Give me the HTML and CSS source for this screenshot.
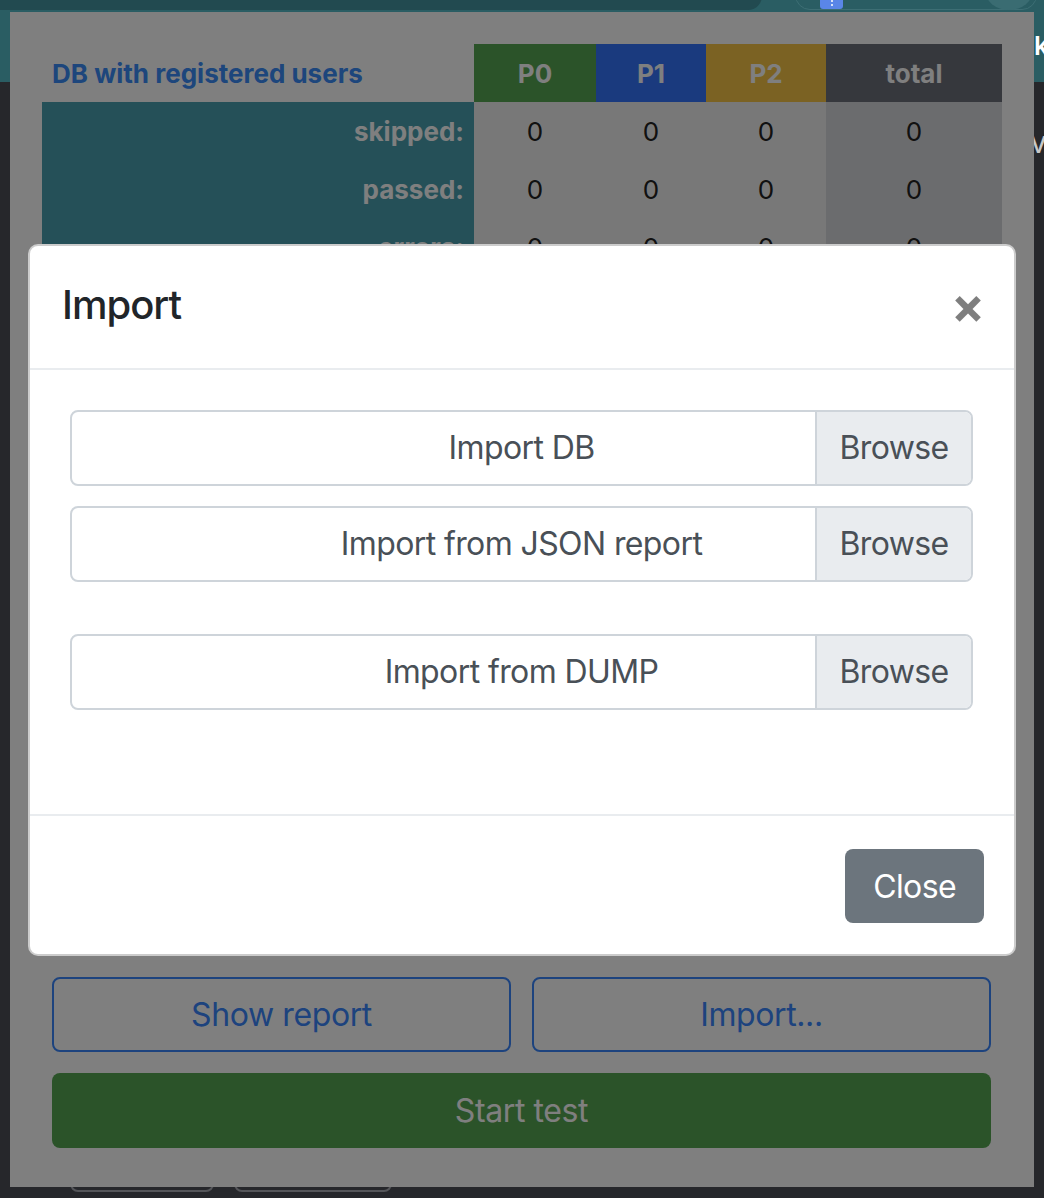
FILE: index.html
```html
<!DOCTYPE html>
<html lang="en">
<head>
    <meta charset="UTF-8">
    <meta name="viewport" content="width=device-width, initial-scale=1.0">
    <title>DB tester</title>
    <link rel="stylesheet" href="styles.css">
</head>
<body>
    <div class="toolbar">
        <span class="tab-pill"></span>
        <span class="omnibox"></span>
        <span class="ext-badge"><i></i><i></i></span>
        <span class="avatar"></span>
        <span class="edge-text">ks</span>
    </div>
    <div class="side-text">ve</div>
    <div class="under-buttons">
        <span class="ghost-btn"></span>
        <span class="ghost-btn wide"></span>
    </div>

    <div class="popup">
        <table class="stats">
            <thead>
                <tr>
                    <th class="caption">DB with registered users</th>
                    <th class="p0">P0</th>
                    <th class="p1">P1</th>
                    <th class="p2">P2</th>
                    <th class="total">total</th>
                </tr>
            </thead>
            <tbody>
                <tr><td class="label">skipped:</td><td>0</td><td>0</td><td>0</td><td class="total">0</td></tr>
                <tr><td class="label">passed:</td><td>0</td><td>0</td><td>0</td><td class="total">0</td></tr>
                <tr><td class="label">errors:</td><td>0</td><td>0</td><td>0</td><td class="total">0</td></tr>
                <tr><td class="label">failed:</td><td>0</td><td>0</td><td>0</td><td class="total">0</td></tr>
                <tr><td class="label">all:</td><td>0</td><td>0</td><td>0</td><td class="total">0</td></tr>
            </tbody>
        </table>

        <div class="log"></div>

        <div class="actions">
            <button class="btn-outline">Show report</button>
            <button class="btn-outline">Import...</button>
        </div>
        <button class="btn-start">Start test</button>

        <div class="backdrop"></div>

        <div class="modal">
            <div class="modal-header">
                <h5 class="modal-title">Import</h5>
                <button class="close">&times;</button>
            </div>
            <div class="modal-body">
                <label class="file-input first">
                    <span class="file-name">Import DB</span>
                    <span class="browse">Browse</span>
                </label>
                <label class="file-input second">
                    <span class="file-name">Import from JSON report</span>
                    <span class="browse">Browse</span>
                </label>
                <label class="file-input">
                    <span class="file-name">Import from DUMP</span>
                    <span class="browse">Browse</span>
                </label>
            </div>
            <div class="modal-footer">
                <button class="btn-secondary">Close</button>
            </div>
        </div>
    </div>
</body>
</html>
```

FILE: styles.css
```css
body {
    margin: 0;
    width: 1044px;
    height: 1198px;
    overflow: hidden;
    position: relative;
    background: #26272b;
    font-family: Inter, 'Noto Sans', sans-serif;
}
.toolbar {
    height: 82px;
    background: #2a5d63;
    position: relative;
}
.tab-pill {
    position: absolute;
    left: 0;
    top: -20px;
    width: 762px;
    height: 30px;
    background: #224a50;
    border-radius: 0 0 14px 0;
}
.omnibox {
    position: absolute;
    left: 795px;
    top: -20px;
    width: 240px;
    height: 28px;
    border: 1px solid #3d6e74;
    border-radius: 16px;
}
.ext-badge {
    position: absolute;
    left: 820px;
    top: 0;
    width: 23px;
    height: 9px;
    background: #5a86e8;
    border-radius: 0 0 3px 3px;
    display: flex;
    flex-direction: column;
    align-items: center;
    gap: 2px;
}
.ext-badge i {
    width: 2px;
    height: 2px;
    border-radius: 50%;
    background: #fff;
}
.avatar {
    position: absolute;
    left: 985px;
    top: -30px;
    width: 48px;
    height: 40px;
    border-radius: 50%;
    background: #3a6c72;
}
.edge-text {
    position: absolute;
    left: 1034px;
    top: 30px;
    color: #fff;
    font-size: 26px;
    font-weight: 600;
}
.side-text {
    position: absolute;
    left: 1030px;
    top: 124px;
    color: #c8c8c8;
    font-size: 30px;
}
.under-buttons {
    position: absolute;
    left: 70px;
    top: 1176px;
    display: flex;
    gap: 20px;
}
.ghost-btn {
    width: 140px;
    height: 12px;
    border: 2px solid #55565a;
    border-radius: 8px;
}
.ghost-btn.wide {
    width: 154px;
}

/* popup page */
.popup {
    position: absolute;
    left: 10px;
    top: 12px;
    width: 1024px;
    height: 1175px;
    box-sizing: border-box;
    padding: 32px;
    background: #fff;
    overflow: hidden;
}
.stats {
    width: 960px;
    border-collapse: collapse;
    table-layout: fixed;
    font-size: 26px;
}
.stats th {
    height: 58px;
    padding: 0;
    color: #fff;
    font-weight: 700;
}
.stats th.caption {
    width: 422px;
    text-align: left;
    padding-left: 10px;
    color: #3b8cf8;
}
.stats th.p0 { width: 122px; background: #56a652; }
.stats th.p1 { width: 110px; background: #3474fc; }
.stats th.p2 { width: 120px; background: #f6c446; }
.stats th.total { background: #6c707a; }
.stats td {
    height: 58px;
    padding: 0;
    text-align: center;
    background: #f0f0f0;
    color: #222;
}
.stats td.label {
    text-align: right;
    padding-right: 10px;
    background: #4aa0b0;
    color: #fff;
    font-weight: 700;
}
.stats td.total {
    background: #d6d8dc;
}
.log {
    height: 545px;
    margin: 20px 0;
}
.actions {
    display: grid;
    grid-template-columns: 1fr 1fr;
    gap: 21px;
    margin: 0 11px 21px 10px;
}
.btn-outline {
    height: 75px;
    background: transparent;
    border: 2px solid #3a86fc;
    border-radius: 8px;
    color: #3a86fc;
    font-family: inherit;
    font-size: 32px;
    letter-spacing: -0.4px;
}
.btn-start {
    display: block;
    width: 939px;
    height: 75px;
    margin-left: 10px;
    border: none;
    border-radius: 8px;
    background: #56a652;
    color: #fff;
    font-family: inherit;
    font-size: 32px;
    letter-spacing: -0.4px;
}
.backdrop {
    position: absolute;
    inset: 0;
    background: rgba(0, 0, 0, 0.5);
}

/* modal */
.modal {
    position: absolute;
    left: 18px;
    top: 232px;
    width: 988px;
    box-sizing: border-box;
    background: #fff;
    border: 2px solid rgba(0, 0, 0, 0.2);
    border-radius: 10px;
}
.modal-header {
    display: flex;
    align-items: center;
    justify-content: space-between;
    padding: 29px 29px 33px 32px;
    border-bottom: 2px solid #e9ecef;
}
.modal-title {
    margin: 0;
    font-size: 40px;
    line-height: 60px;
    font-weight: 500;
    letter-spacing: -1px;
    color: #212529;
}
.close {
    padding: 0;
    border: none;
    background: none;
    font-family: inherit;
    font-size: 50px;
    font-weight: 700;
    line-height: 1;
    color: #000;
    opacity: 0.5;
}
.modal-body {
    display: flex;
    flex-direction: column;
    padding: 40px 32px 104px 32px;
}
.file-input {
    display: flex;
    height: 76px;
    box-sizing: border-box;
    margin: 0 9px 0 8px;
    border: 2px solid #ced4da;
    border-radius: 8px;
    color: #495057;
    font-size: 32px;
    line-height: 72px;
    letter-spacing: -0.6px;
    overflow: hidden;
}
.file-input.first {
    margin-bottom: 20px;
}
.file-input.second {
    margin-bottom: 52px;
}
.file-name {
    flex: 1;
    text-align: center;
    padding-left: 156px;
}
.browse {
    width: 154px;
    text-align: center;
    background: #e9ecef;
    border-left: 2px solid #ced4da;
}
.modal-footer {
    display: flex;
    justify-content: flex-end;
    padding: 33px 30px 31px 30px;
    border-top: 2px solid #e9ecef;
}
.btn-secondary {
    height: 74px;
    padding: 0 28px;
    border: none;
    border-radius: 8px;
    background: #6c757d;
    color: #fff;
    font-family: inherit;
    font-size: 32px;
    letter-spacing: -0.6px;
}
```
